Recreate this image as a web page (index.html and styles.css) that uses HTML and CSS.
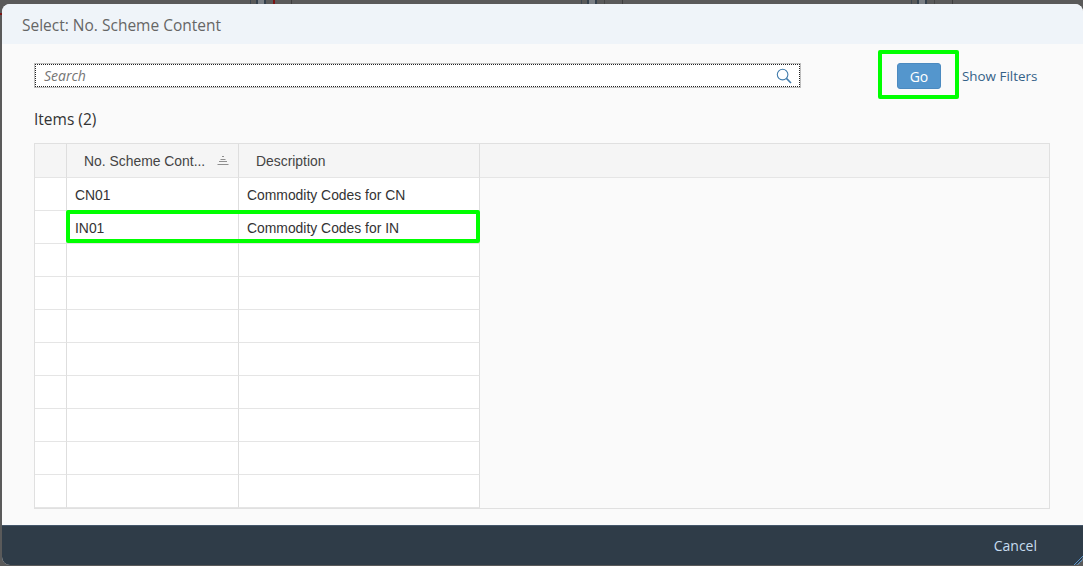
FILE: index.html
```html
<!DOCTYPE html>
<html lang="en">
<head>
<meta charset="utf-8">
<title>Select: No. Scheme Content</title>
<link rel="stylesheet" href="styles.css">
</head>
<body>
<div class="backdrop">
  <span class="bg-mark bg-mark-a"></span>
  <span class="bg-mark bg-mark-b"></span>
  <span class="bg-mark bg-mark-c"></span>
  <span class="bg-red"></span>
  <section class="dialog">
    <header class="dialog-head">Select: No. Scheme Content</header>
    <div class="dialog-body">
      <div class="filter-bar">
        <div class="search">
          <span class="search-text">Search</span>
          <svg class="search-icon" width="16" height="16" viewBox="0 0 16 16"><circle cx="6.6" cy="6.6" r="5.3" fill="none" stroke="#427cac" stroke-width="1.1"/><path d="M10.4 10.4 L15 15" stroke="#427cac" stroke-width="1.6" fill="none"/></svg>
        </div>
        <div class="go-wrap">
          <button class="go">Go</button>
          <span class="mark mark-go"></span>
        </div>
        <a class="show-filters">Show Filters</a>
      </div>
      <h2 class="items-title">Items (2)</h2>
      <div class="grid">
        <div class="row row-head">
          <div class="cell sel"></div>
          <div class="cell c1 head-c1"><span>No. Scheme Cont...</span>
            <svg class="sort" width="12" height="9" viewBox="0 0 12 9"><path d="M5 0.5h2M3.5 3.5h5M2 5.5h8M0.5 8.5h11" stroke="#8f8f8f" stroke-width="1" fill="none"/></svg>
          </div>
          <div class="cell c2 head-c2">Description</div>
          <div class="cell fill"></div>
        </div>
        <div class="row"><div class="cell sel"></div><div class="cell c1">CN01</div><div class="cell c2">Commodity Codes for CN</div><div class="cell fill blank"></div></div>
        <div class="row picked"><div class="cell sel"></div><div class="cell c1">IN01</div><div class="cell c2">Commodity Codes for IN</div><div class="cell fill blank"></div><span class="mark mark-row"></span></div>
        <div class="row"><div class="cell sel"></div><div class="cell c1"></div><div class="cell c2"></div><div class="cell fill blank"></div></div>
        <div class="row"><div class="cell sel"></div><div class="cell c1"></div><div class="cell c2"></div><div class="cell fill blank"></div></div>
        <div class="row"><div class="cell sel"></div><div class="cell c1"></div><div class="cell c2"></div><div class="cell fill blank"></div></div>
        <div class="row"><div class="cell sel"></div><div class="cell c1"></div><div class="cell c2"></div><div class="cell fill blank"></div></div>
        <div class="row"><div class="cell sel"></div><div class="cell c1"></div><div class="cell c2"></div><div class="cell fill blank"></div></div>
        <div class="row"><div class="cell sel"></div><div class="cell c1"></div><div class="cell c2"></div><div class="cell fill blank"></div></div>
        <div class="row"><div class="cell sel"></div><div class="cell c1"></div><div class="cell c2"></div><div class="cell fill blank"></div></div>
        <div class="row"><div class="cell sel"></div><div class="cell c1"></div><div class="cell c2"></div><div class="cell fill blank"></div></div>
      </div>
    </div>
    <footer class="dialog-foot">
      <a class="cancel">Cancel</a>
      <svg class="grip" width="9" height="9" viewBox="0 0 9 9"><path d="M0 9L9 0M3 9L9 3M6 9L9 6" stroke="#5b93c7" stroke-width="1" fill="none"/></svg>
    </footer>
  </section>
</div>
</body>
</html>
```
FILE: styles.css
```css
* { box-sizing: border-box; }
html, body { margin: 0; height: 100%; }
body { overflow: hidden; font-family: "Open Sans", "Liberation Sans", sans-serif; }
.backdrop {
  position: relative;
  width: 1083px;
  height: 566px;
  background: #5a5a5a;
  padding: 4px 0 1px 2px;
}
.bg-mark { position: absolute; top: 0; height: 4px; width: 42px; }
.bg-mark-a { left: 250px; background: linear-gradient(90deg, #3c4650 0 1px, transparent 1px 6px, #34404c 6px 8px, #7a7f85 8px 14px, #34404c 14px 16px, transparent 16px 23px, #7d1414 23px 25px, transparent 25px 41px, #3e3e3e 41px 42px); }
.bg-mark-b { left: 581px; background: linear-gradient(90deg, #3c4650 0 1px, transparent 1px 6px, #34404c 6px 8px, #7a7f85 8px 14px, #34404c 14px 16px, transparent 16px 23px, #464646 23px 24px, transparent 24px 41px, #3e3e3e 41px 42px); }
.bg-mark-c { left: 911px; background: linear-gradient(90deg, #3c4650 0 1px, transparent 1px 6px, #34404c 6px 8px, #7a7f85 8px 14px, #34404c 14px 16px, transparent 16px 23px, #464646 23px 24px, transparent 24px 41px, #3e3e3e 41px 42px); }
.bg-red { position: absolute; left: 0; top: 13px; width: 2px; height: 2px; background: #7d1414; }
.dialog {
  position: relative;
  display: flex;
  flex-direction: column;
  height: 561px;
  border-radius: 8px;
  overflow: hidden;
  background: #fafafa;
}
.dialog-head {
  height: 40px;
  flex: none;
  background: #eff4f9;
  color: #666;
  font-size: 15.5px;
  line-height: 43px;
  padding-left: 20px;
}
.dialog-body { flex: 1; padding: 19px 32px 0; min-height: 0; }
.filter-bar { display: flex; align-items: flex-start; height: 26px; }
.search {
  width: 767px;
  height: 25px;
  background: #fff;
  border: 1px solid #bfbfbf;
  outline: 1px dotted #222;
  outline-offset: -2px;
  display: flex;
  align-items: center;
  justify-content: space-between;
  padding: 0 8px 0 9px;
}
.search-text { font-style: italic; font-size: 14px; color: #757575; }
.search-icon { flex: none; }
.go-wrap { position: relative; margin-left: 96px; flex: none; }
.go {
  display: block;
  width: 44px;
  height: 26px;
  padding: 0;
  border: 1px solid #4b8ac0;
  border-radius: 3px;
  background: #5496cd;
  color: #fff;
  font: 400 14px "Open Sans", "Liberation Sans", sans-serif;
}
.mark { position: absolute; border: 4px solid #00ff00; border-radius: 2px; pointer-events: none; }
.mark-go { left: -19px; top: -13px; width: 81px; height: 49px; }
.show-filters { margin-left: 21px; align-self: center; font-size: 13.4px; color: #346187; white-space: nowrap; }
.items-title {
  margin: 20px 0 0;
  height: 21px;
  font-weight: 400;
  font-size: 15.5px;
  line-height: 21px;
  color: #333;
}
.grid {
  margin-top: 13px;
  width: 1016px;
  height: 366px;
  border: 1px solid #e0e0e0;
  background: #fafafa;
}
.row { position: relative; display: flex; height: 33px; font-family: "Liberation Sans", Arial, sans-serif; font-size: 13.9px; color: #333; }
.row-head { height: 34px; background: #f5f5f5; }
.row-head .cell { background: #f5f5f5; }
.cell {
  flex: none;
  height: 100%;
  line-height: 34px;
  background: #fff;
  border-right: 1px solid #dedede;
  border-bottom: 1px solid #e5e5e5;
  white-space: nowrap;
}
.row-head .cell { line-height: 35px; }
.sel { width: 32px; background: #fff; }
.row-head .sel { background: #f5f5f5; }
.c1 { width: 172px; padding-left: 8px; }
.c2 { width: 241px; padding-left: 8px; }
.fill { flex: 1; border-right: 0; }
.fill.blank { background: #fafafa; border-bottom: 0; }
.head-c1 { display: flex; align-items: center; justify-content: space-between; padding: 1px 9px 0 17px; color: #444; }
.head-c2 { padding-left: 17px; color: #444; }
.sort { flex: none; margin-top: -1px; }
.mark-row { left: 31px; top: -1px; width: 414px; height: 33px; }
.dialog-foot {
  position: relative;
  flex: none;
  height: 40px;
  background: #2f3c48;
  border-top: 1px solid #44566a;
  display: flex;
  align-items: center;
  justify-content: flex-end;
  padding-right: 46px;
}
.cancel { color: #c7dcf0; font-size: 14px; }
.grip { position: absolute; right: 0; bottom: 0; }
```
